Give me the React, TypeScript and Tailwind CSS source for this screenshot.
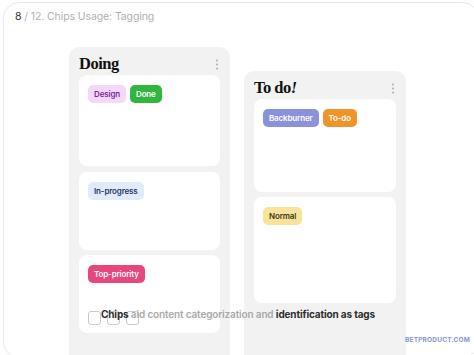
import React from "react";

const Chip = ({ label, cls }: { label: string; cls: string }) => (
  <span
    className={`inline-flex items-center h-[18px] px-[6px] rounded-[5px] text-[8px] font-semibold leading-none tracking-[-0.15px] ${cls}`}
  >
    {label}
  </span>
);

const Dots = () => (
  <svg width="4" height="11" viewBox="0 0 4 11" className="mr-[1px]">
    <circle cx="2" cy="1.5" r="1.1" fill="#b5b5b5" />
    <circle cx="2" cy="5.5" r="1.1" fill="#b5b5b5" />
    <circle cx="2" cy="9.5" r="1.1" fill="#b5b5b5" />
  </svg>
);

const Card = ({ h, children }: { h: string; children: React.ReactNode }) => (
  <div className={`bg-white rounded-[8px] pt-[10px] px-[9px] ${h}`}>
    <div className="flex gap-[4px]">{children}</div>
  </div>
);

const Column = ({
  title,
  cls,
  children,
}: {
  title: React.ReactNode;
  cls: string;
  children: React.ReactNode;
}) => (
  <div className={`bg-[#f2f2f2] rounded-[10px] px-[10px] pt-[6px] ${cls}`}>
    <div className="h-[22px] flex items-center justify-between">
      <span className="font-['Liberation_Serif',serif] font-bold text-[16.5px] tracking-[-0.5px] text-[#111] leading-none">
        {title}
      </span>
      <Dots />
    </div>
    <div className="flex flex-col gap-[5px]">{children}</div>
  </div>
);

export default function App() {
  return (
    <div className="relative w-[474px] h-[355px] overflow-hidden bg-white font-['Inter',sans-serif]">
      <div className="mt-[2px] ml-[3px] w-[476px] h-[356px] border border-[#e8e8e8] rounded-[16px] pl-[11px] pt-[7px]">
        <div className="h-[14px] flex items-center text-[10.5px] text-[#b0b0b0] tracking-[-0.1px]">
          <span className="text-[#333]">8</span>
          <span>&nbsp;/ 12. Chips Usage: Tagging</span>
        </div>
        <div className="flex items-start gap-[14px] mt-[23px] pl-[54px]">
          <Column title="Doing" cls="w-[161px] h-[330px]">
            <Card h="h-[91px]">
              <Chip label="Design" cls="bg-[#f3d8fb] text-[#7b2a9c]" />
              <Chip label="Done" cls="bg-[#30b540] text-white" />
            </Card>
            <Card h="h-[78px] mt-[1px]">
              <Chip label="In-progress" cls="bg-[#e2ebfa] text-[#23376a]" />
            </Card>
            <Card h="h-[78px]">
              <Chip label="Top-priority" cls="bg-[#e8467f] text-white" />
            </Card>
          </Column>
          <Column
            title={
              <>
                To do<span className="italic">!</span>
              </>
            }
            cls="w-[162px] h-[310px] mt-[24px]"
          >
            <Card h="h-[93px]">
              <Chip label="Backburner" cls="bg-[#8a92dd] text-white" />
              <Chip label="To-do" cls="bg-[#ee9428] text-white" />
            </Card>
            <Card h="h-[106px]">
              <Chip label="Normal" cls="bg-[#f7e39a] text-[#3b3720]" />
            </Card>
          </Column>
        </div>
      </div>

      <div className="absolute left-[88px] top-[311px] flex gap-[6px]">
        <div className="w-[13px] h-[14px] rounded-[3px] border border-[#c9c9c9]" />
        <div className="w-[13px] h-[14px] rounded-[3px] border border-[#c9c9c9]" />
        <div className="w-[13px] h-[14px] rounded-[3px] border border-[#c9c9c9]" />
      </div>
      <div className="absolute left-[101px] top-[306px] whitespace-nowrap text-[10px] font-semibold tracking-[-0.15px] leading-[16px]">
        <span className="text-[#2e2e2e] font-bold">Chips</span>
        <span className="text-[#a9a9a9]"> aid content categorization and </span>
        <span className="text-[#2e2e2e] font-bold">identification as tags</span>
      </div>
      <div className="absolute left-[405px] top-[337px] text-[6.5px] font-bold tracking-[0.2px] text-[#8b93da] leading-none">
        BETPRODUCT.COM
      </div>
    </div>
  );
}
